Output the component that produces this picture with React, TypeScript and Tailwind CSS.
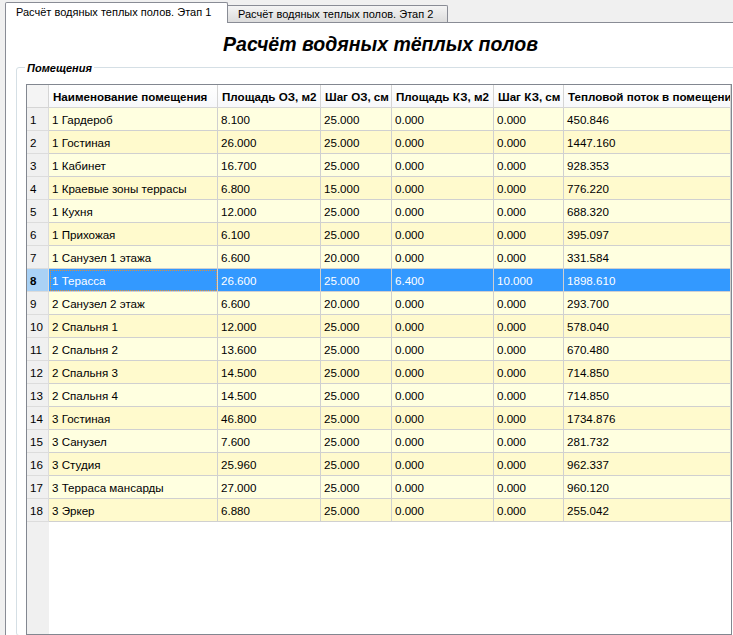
import React from 'react';

type Room = [string, string, string, string, string, string];

const rooms: Room[] = [
  ['1 Гардероб', '8.100', '25.000', '0.000', '0.000', '450.846'],
  ['1 Гостиная', '26.000', '25.000', '0.000', '0.000', '1447.160'],
  ['1 Кабинет', '16.700', '25.000', '0.000', '0.000', '928.353'],
  ['1 Краевые зоны террасы', '6.800', '15.000', '0.000', '0.000', '776.220'],
  ['1 Кухня', '12.000', '25.000', '0.000', '0.000', '688.320'],
  ['1 Прихожая', '6.100', '25.000', '0.000', '0.000', '395.097'],
  ['1 Санузел 1 этажа', '6.600', '20.000', '0.000', '0.000', '331.584'],
  ['1 Терасса', '26.600', '25.000', '6.400', '10.000', '1898.610'],
  ['2 Санузел 2 этаж', '6.600', '20.000', '0.000', '0.000', '293.700'],
  ['2 Спальня 1', '12.000', '25.000', '0.000', '0.000', '578.040'],
  ['2 Спальня 2', '13.600', '25.000', '0.000', '0.000', '670.480'],
  ['2 Спальня 3', '14.500', '25.000', '0.000', '0.000', '714.850'],
  ['2 Спальня 4', '14.500', '25.000', '0.000', '0.000', '714.850'],
  ['3 Гостиная', '46.800', '25.000', '0.000', '0.000', '1734.876'],
  ['3 Санузел', '7.600', '25.000', '0.000', '0.000', '281.732'],
  ['3 Студия', '25.960', '25.000', '0.000', '0.000', '962.337'],
  ['3 Терраса мансарды', '27.000', '25.000', '0.000', '0.000', '960.120'],
  ['3 Эркер', '6.880', '25.000', '0.000', '0.000', '255.042'],
];

const headers = [
  'Наименование помещения',
  'Площадь ОЗ, м2',
  'Шаг ОЗ, см',
  'Площадь КЗ, м2',
  'Шаг КЗ, см',
  'Тепловой поток в помещении, Вт',
];

// column widths incl. right grid line
const colW = ['w-[169px]', 'w-[103px]', 'w-[71px]', 'w-[102px]', 'w-[70px]', 'flex-1'];

const SELECTED = 7;

function DataRow({ room, index }: { room: Room; index: number }) {
  const selected = index === SELECTED;
  const rowBg = selected ? 'bg-[#3399ff] text-white' : index % 2 === 0 ? 'bg-[#ffffe0]' : 'bg-[#fffacd]';
  return (
    <div className="flex h-[23px] shrink-0">
      <div
        className={`w-[22px] shrink-0 flex items-center pl-[3px] pt-[1px] border-b border-r border-[#dcdcdc] ${
          selected ? 'bg-[#a9d1f5] font-bold' : 'bg-[#f0f0f0]'
        }`}
      >
        {index + 1}
      </div>
      {room.map((v, i) => (
        <div
          key={i}
          className={`${colW[i]} shrink-0 flex items-center pl-[3px] pt-[1px] border-b border-r border-[#d0d0d0] whitespace-nowrap overflow-hidden ${rowBg} ${
            selected && i === 0 ? 'outline-1 outline-dotted outline-[#e0903a] outline-offset-[-2px]' : ''
          }`}
        >
          {v}
        </div>
      ))}
    </div>
  );
}

export default function App() {
  return (
    <div className="w-[733px] h-[635px] overflow-hidden bg-[#f0f0f0] pt-[2px] pl-[5px] flex flex-col font-['Liberation_Sans',Arial,sans-serif] text-black">
      {/* Tabs */}
      <div className="flex items-start h-[20px] shrink-0 relative z-10">
        <div className="h-[21px] w-[223px] bg-white border border-b-0 border-[#898c95] rounded-t-[2px] text-[11px] flex items-center pl-[10px] pb-[1px]">
          Расчёт водяных теплых полов. Этап 1
        </div>
        <div className="mt-[3px] h-[17px] w-[220px] bg-linear-to-b from-[#f4f4f4] to-[#dcdcdc] border border-l-0 border-b-0 border-[#898c95] rounded-tr-[2px] text-[11px] flex items-center pl-[10px]">
          Расчёт водяных теплых полов. Этап 2
        </div>
      </div>

      {/* Tab page */}
      <div className="w-[750px] flex-1 bg-white border-l border-t border-[#898c95] pt-[9px] flex flex-col">
        <h1 className="text-center text-[19.5px] leading-[24px] font-bold italic">Расчёт водяных тёплых полов</h1>

        <div className="relative ml-[10px] mt-[11px] w-[730px] flex-1 border border-[#d5dfe5] rounded-[3px] pl-[9px] pt-[16px]">
          <span className="absolute left-[8px] -top-[7px] bg-white px-[2px] text-[11px] leading-[14px] font-bold italic">
            Помещения
          </span>

          {/* Grid */}
          <div className="w-[706px] h-[551px] border border-[#828790] flex flex-col text-[11.6px] overflow-hidden">
            <div className="flex h-[23px] shrink-0 font-bold">
              <div className="w-[22px] shrink-0 bg-[#f4f4f4] border-b border-r border-[#d5d5d5]" />
              {headers.map((h, i) => (
                <div
                  key={h}
                  className={`${colW[i]} shrink-0 flex items-center pl-[4px] pt-[1px] bg-linear-to-b from-white to-[#f7f8fa] border-b border-r border-[#d5d5d5] whitespace-nowrap overflow-hidden`}
                >
                  {h}
                </div>
              ))}
            </div>
            {rooms.map((r, i) => (
              <DataRow key={i} room={r} index={i} />
            ))}
            <div className="flex flex-1">
              <div className="w-[22px] bg-[#f0f0f0]" />
              <div className="flex-1 bg-white" />
            </div>
          </div>
        </div>
      </div>
    </div>
  );
}
